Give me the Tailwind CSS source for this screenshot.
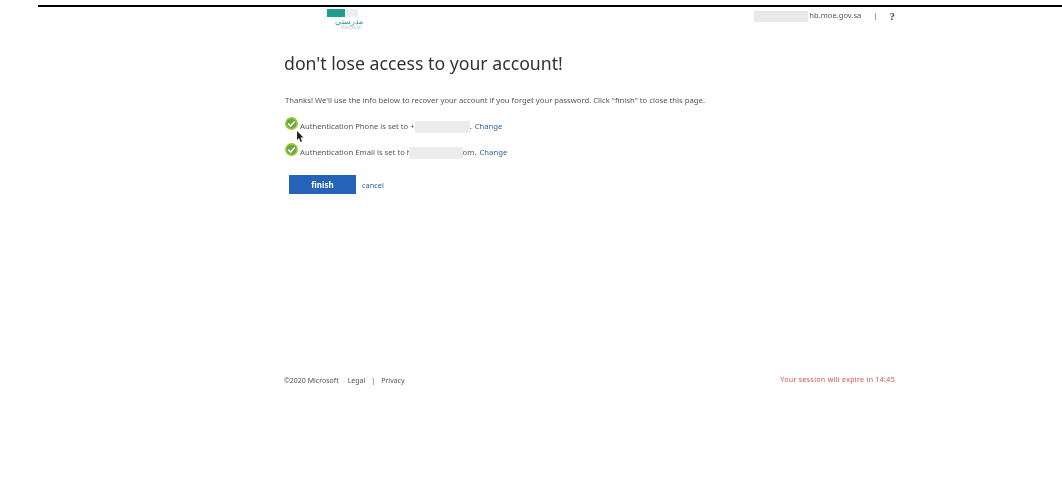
<!DOCTYPE html>
<html lang="en">
<head>
    <meta charset="UTF-8">
    <title>don't lose access to your account!</title>
    <script src="https://cdn.jsdelivr.net/npm/@tailwindcss/browser@4"></script>
</head>
<body class="w-[1062px] h-[491px] overflow-hidden bg-white font-['Noto_Sans',sans-serif]">
    <!-- Top rule -->
    <div class="ml-[38px] mt-[5px] h-[2px] bg-black"></div>

    <div class="ml-[284px] w-[611px]">
        <!-- Header -->
        <div class="flex items-start justify-between h-[23px] blur-[0.5px]">
            <div class="ml-[43px] w-[40px]">
                <div class="flex items-center h-[9px] gap-[1px] mt-[1px]">
                    <div class="w-[18px] h-[8px] bg-[#1f9e8c]"></div>
                    <div class="w-[12px] h-[8px] bg-[#e6f1f0]"></div>
                </div>
                <div class="ml-[4px] text-[8px] leading-[8px] text-[#2aa193] text-center">مدرستي</div>
                <div class="ml-[8px] text-[4.5px] leading-[4px] text-[#b5d2ce] text-center">Madrasati</div>
            </div>
            <div class="flex items-center mt-[3px] h-[12px] text-[7.6px] text-[#555]">
                <div class="w-[54px] h-[11px] bg-[#e9e9e9]"></div>
                <span class="ml-[1px]">hb.moe.gov.sa</span>
                <span class="ml-[12px]">|</span>
                <span class="ml-[12px] text-[11px] font-bold font-['Liberation_Serif',serif] text-[#444]">?</span>
            </div>
        </div>

        <!-- Title -->
        <h1 class="mt-[19px] text-[17.7px] leading-[28px] text-[#333] blur-[0.3px]">don't lose access to your account!</h1>

        <div class="blur-[0.3px]">
            <p class="mt-[18px] ml-[1px] text-[7.7px] leading-[10px] text-[#555]">Thanks! We'll use the info below to recover your account if you forget your password. Click "finish" to close this page.</p>

            <!-- Status rows -->
            <div class="mt-[12px] ml-[1px] flex items-start text-[7.7px] text-[#555]">
                <svg class="w-[13px] h-[13px] shrink-0" viewBox="0 0 16 16">
                    <circle cx="8" cy="8" r="7" fill="#6aa83a" stroke="#9ccb3b" stroke-width="2"></circle>
                    <path d="M4 8.2l3 3 5-5.6" fill="none" stroke="#fff" stroke-width="2"></path>
                </svg>
                <div class="flex items-center h-[12px] ml-[2px] mt-[4px]">
                    <span>Authentication Phone is set to +</span>
                    <div class="w-[55px] h-[12px] bg-[#ececec]"></div>
                    <span>.</span>
                    <a class="ml-[3px] text-[#2f5fa8]">Change</a>
                </div>
            </div>
            <div class="mt-[10px] ml-[1px] flex items-start text-[7.7px] text-[#555]">
                <svg class="w-[13px] h-[13px] shrink-0" viewBox="0 0 16 16">
                    <circle cx="8" cy="8" r="7" fill="#6aa83a" stroke="#9ccb3b" stroke-width="2"></circle>
                    <path d="M4 8.2l3 3 5-5.6" fill="none" stroke="#fff" stroke-width="2"></path>
                </svg>
                <div class="flex items-center h-[12px] ml-[2px] mt-[4px]">
                    <span>Authentication Email is set to h</span>
                    <div class="-ml-[3px] w-[54px] h-[12px] bg-[#ececec]"></div>
                    <span>om.</span>
                    <a class="ml-[3px] text-[#2f5fa8]">Change</a>
                </div>
            </div>

            <!-- Actions -->
            <div class="mt-[16px] ml-[5px] flex items-center">
                <button class="w-[67px] h-[19px] bg-[#2463b8] text-white text-[8px] font-bold">finish</button>
                <a class="ml-[6px] mt-[2px] text-[7.4px] text-[#2f5fa8]">cancel</a>
            </div>
        </div>

        <!-- Footer -->
        <div class="mt-[182px] flex justify-between text-[7px] leading-[10px] blur-[0.4px]">
            <div class="flex text-[#555]">
                <span>©2020 Microsoft</span>
                <span class="ml-[9px]">Legal</span>
                <span class="ml-[6px]">|</span>
                <span class="ml-[6px]">Privacy</span>
            </div>
            <span class="-mt-[1px] text-[#d9534f] tracking-[0.33px]">Your session will expire in 14:45</span>
        </div>
    </div>

    <!-- Mouse cursor -->
    <svg class="absolute left-[297px] top-[131px] w-[7px] h-[11px]" viewBox="0 0 7 11">
        <path d="M0 0v9l2-2 1.5 4 1.5-.6L3.6 6.6H6.5z" fill="#222"></path>
    </svg>
</body>
</html>
